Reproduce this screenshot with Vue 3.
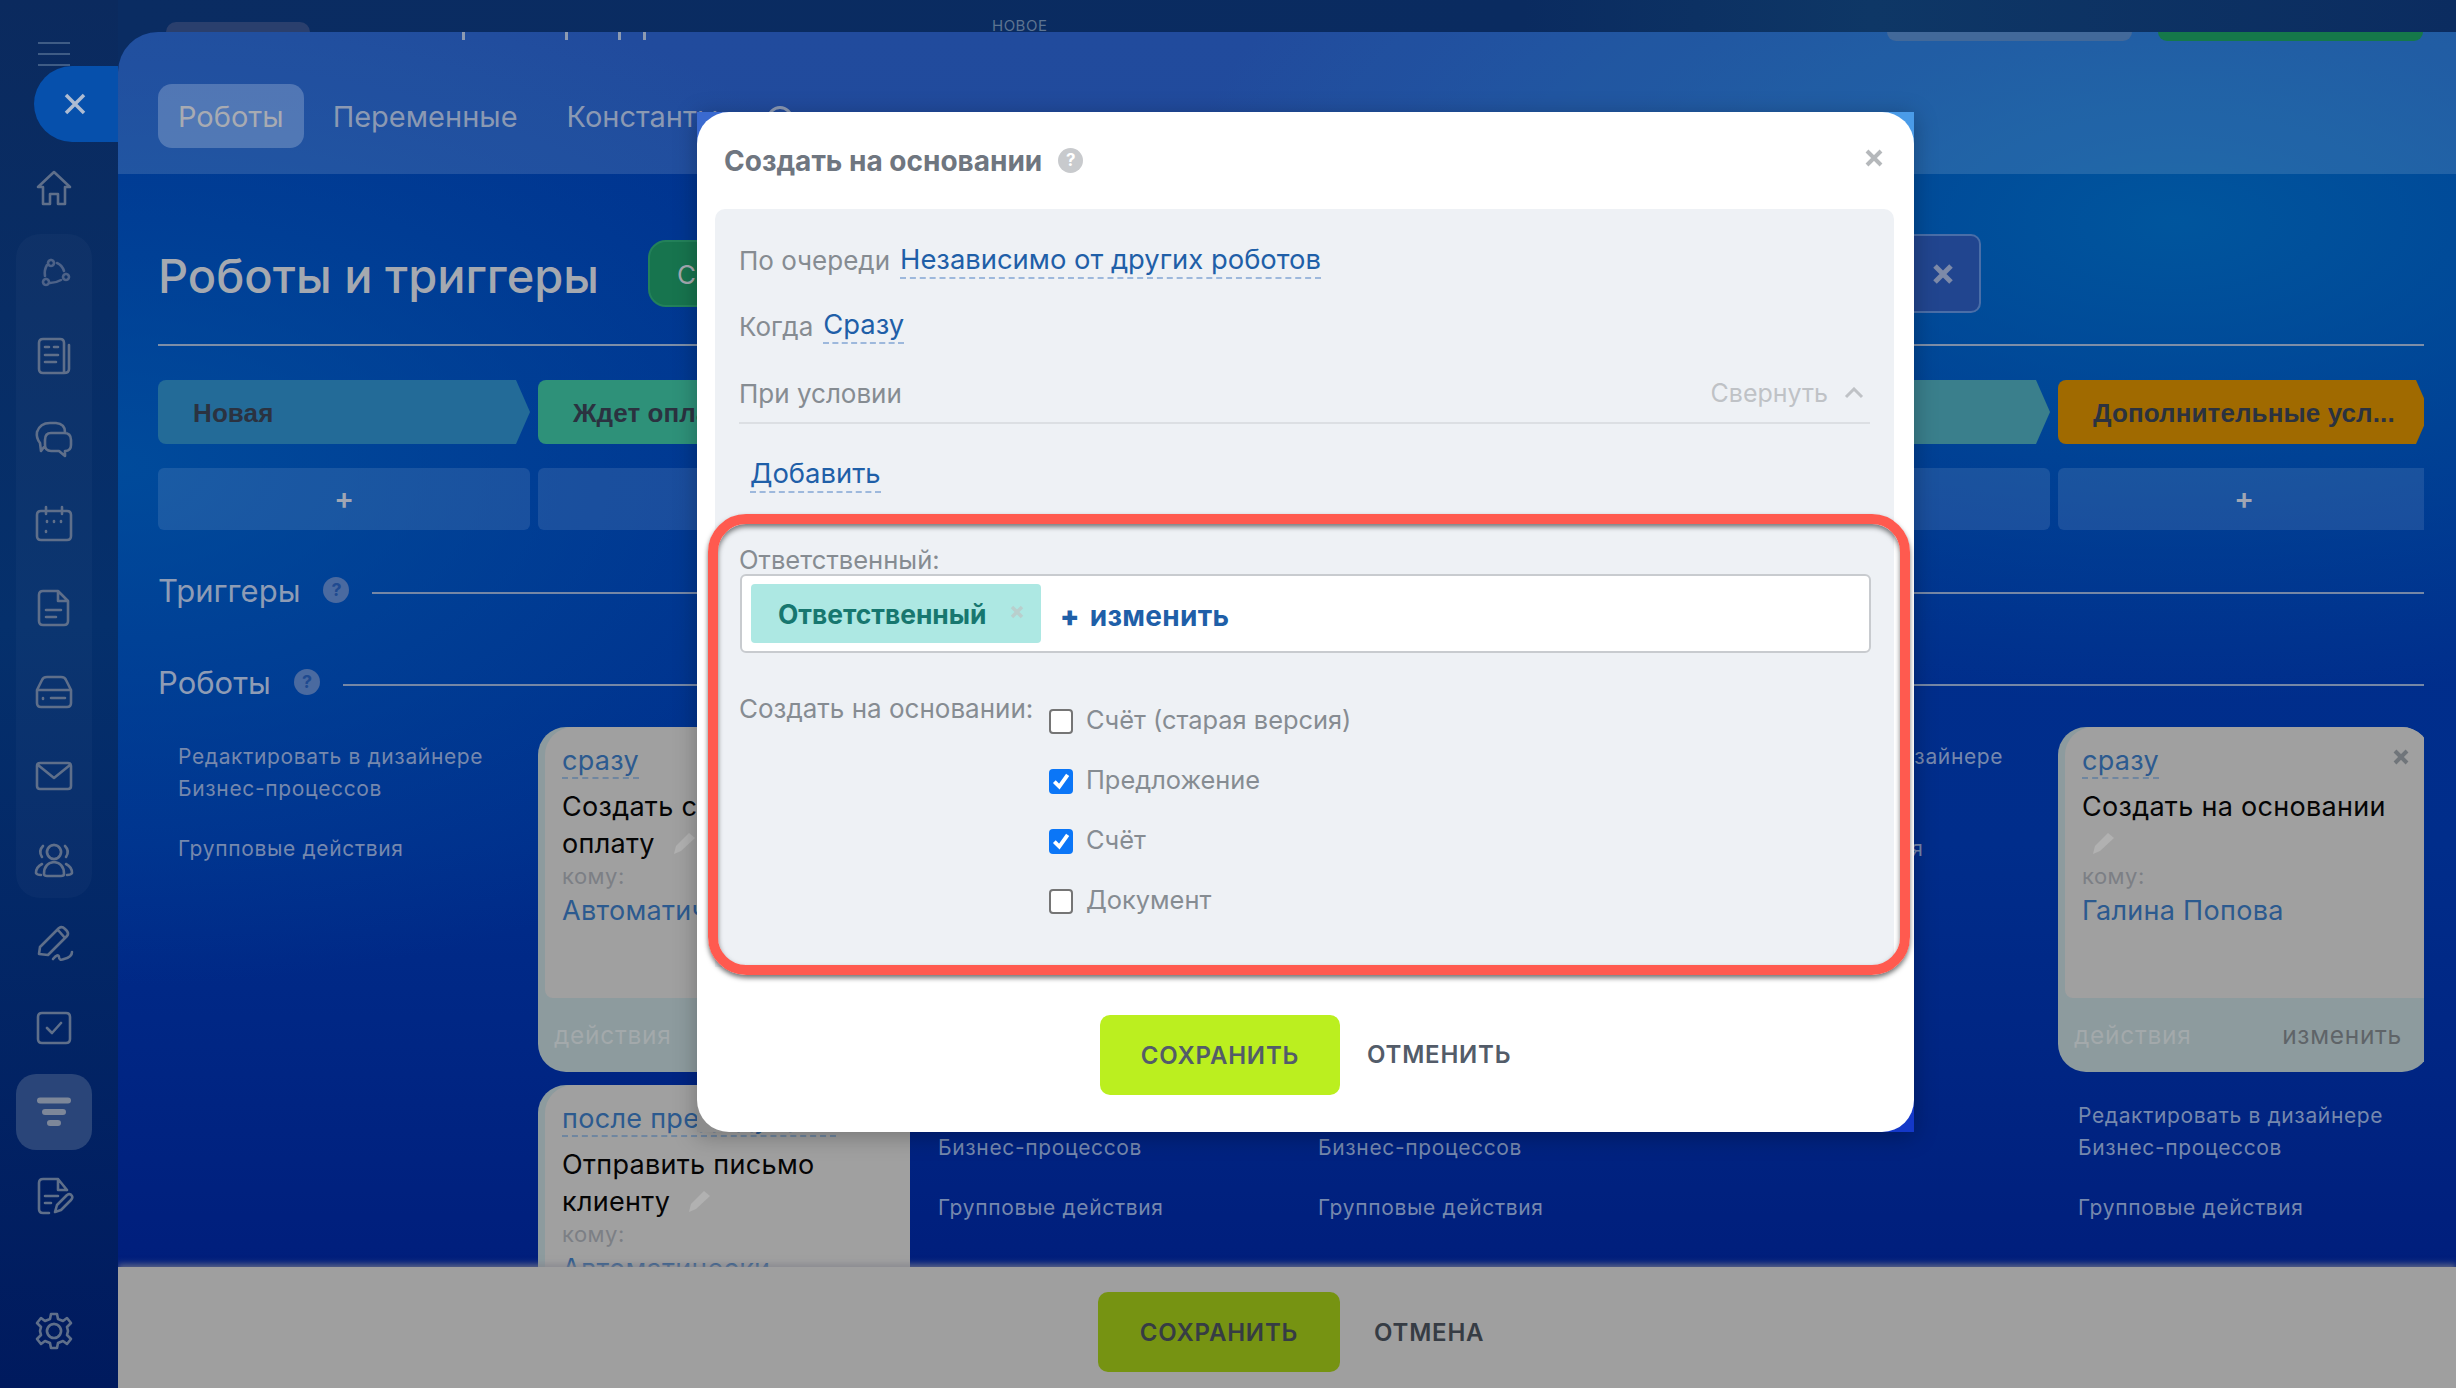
<template>
  <div class="page">
    <aside class="sidebar">
      <div class="burger"><i></i><i></i><i></i></div>
      <div class="close-tab">
        <svg width="24" height="24" viewBox="0 0 24 24"><path d="M3 3L21 21M21 3L3 21" /></svg>
      </div>
      <div class="nav-cell" v-for="ic in navTop" :key="ic"><svg width="40" height="40" viewBox="0 0 40 40"><path :d="ic" /></svg></div>
      <div class="nav-group">
        <div class="nav-item" v-for="ic in navGroup" :key="ic"><svg width="40" height="40" viewBox="0 0 40 40"><path :d="ic" /></svg></div>
      </div>
      <div class="nav-cell" v-for="ic in navMid" :key="ic"><svg width="40" height="40" viewBox="0 0 40 40"><path :d="ic" /></svg></div>
      <div class="nav-cell active"><svg class="thick" width="40" height="40" viewBox="0 0 40 40"><path d="M6 8.500H34M11 20H29M16 31H24" /></svg></div>
      <div class="nav-cell"><svg width="40" height="40" viewBox="0 0 40 40"><path :d="docEdit" /></svg></div>
      <div class="nav-cell gear"><svg width="40" height="40" viewBox="0 0 40 40"><path :d="gear" /></svg></div>
    </aside>

    <div class="main">
      <div class="topbar">
        <div class="top-pill"></div>
        <div class="top-new">НОВОЕ</div>
      </div>
      <div class="panel">
        <span class="tick" v-for="x in [344, 447, 500, 525]" :key="x" :style="{ left: x + 'px' }"></span>
        <span class="peek grey"></span>
        <span class="peek green"></span>
        <div class="tabs">
          <div class="tab on">Роботы</div>
          <div class="tab">Переменные</div>
          <div class="tab">Константы</div>
          <span class="tab-help"></span>
        </div>
        <div class="body">
          <div class="title-row">
            <h1>Роботы и триггеры</h1>
            <div class="btn-green">Создать</div>
            <div class="btn-x">
              <svg width="22" height="22" viewBox="0 0 22 22"><path d="M3 3L19 19M19 3L3 19" /></svg>
            </div>
          </div>
          <div class="stages">
            <div class="stage-col" v-for="(s, i) in stages" :key="i">
              <div class="stage" :style="{ background: s.color }">{{ s.name }}</div>
              <div class="stage-add">+</div>
            </div>
          </div>
          <div class="section"><span class="section-name">Триггеры</span><span class="help">?</span><span class="section-line"></span></div>
          <div class="section second"><span class="section-name">Роботы</span><span class="help">?</span><span class="section-line"></span></div>
          <div class="robots">
            <div class="robot-col" v-for="(col, i) in columns" :key="i">
              <div class="card" v-for="(c, j) in col.cards" :key="j">
                <div class="card-main">
                  <template v-if="c.title">
                    <span class="when">{{ c.when }}</span>
                    <svg v-if="c.close" class="card-x" width="16" height="16" viewBox="0 0 16 16"><path d="M2 2L14 14M14 2L2 14" /></svg>
                    <div class="card-title">{{ c.title }}
                      <svg class="pencil" width="26" height="24" viewBox="0 0 26 24"><path d="M18 2L24 7L10 20L3 23L5 15Z" /></svg>
                    </div>
                    <div class="to">кому:</div>
                    <div class="who">{{ c.who }}</div>
                  </template>
                </div>
                <div class="card-foot" v-if="c.title"><span class="acts">действия</span><span class="edit">изменить</span></div>
              </div>
              <div class="links" v-if="col.links">
                <div>Редактировать в дизайнере<br />Бизнес-процессов</div>
                <div class="links-gap">Групповые действия</div>
              </div>
            </div>
          </div>
        </div>
        <div class="footer">
          <div class="footer-save">СОХРАНИТЬ</div>
          <div class="footer-cancel">ОТМЕНА</div>
        </div>
      </div>
    </div>

    <div class="modal-back">
      <div class="modal">
        <div class="modal-head">
          <span class="modal-title">Создать на основании</span>
          <span class="modal-help">?</span>
          <svg class="modal-x" width="18" height="18" viewBox="0 0 18 18"><path d="M2 2L16 16M16 2L2 16" /></svg>
        </div>
        <div class="form">
          <div class="form-top">
            <div class="row"><span class="lbl">По очереди</span><span class="dash">Независимо от других роботов</span></div>
            <div class="row when-row"><span class="lbl">Когда</span><span class="dash">Сразу</span></div>
            <div class="cond">
              <span class="lbl">При условии</span>
              <span class="fold">Свернуть
                <svg width="20" height="12" viewBox="0 0 20 12"><path d="M2 10L10 2L18 10" /></svg>
              </span>
            </div>
            <div class="add"><span class="dash">Добавить</span></div>
          </div>
          <div class="highlight">
            <div class="lbl resp">Ответственный:</div>
            <div class="resp-box">
              <div class="tag">Ответственный
                <svg width="14" height="14" viewBox="0 0 14 14"><path d="M2 2L12 12M12 2L2 12" /></svg>
              </div>
              <div class="change"><b>+</b> изменить</div>
            </div>
            <div class="base">
              <div class="lbl base-lbl">Создать на основании:</div>
              <div>
                <div class="check-row" v-for="o in options" :key="o.text">
                  <span class="check" :class="{ checked: o.on }">
                    <svg v-if="o.on" width="20" height="20" viewBox="0 0 18 18"><path d="M3 9.500L7.500 14L15 3.500" /></svg>
                  </span>
                  {{ o.text }}
                </div>
              </div>
            </div>
          </div>
        </div>
        <div class="modal-foot">
          <div class="modal-save">СОХРАНИТЬ</div>
          <div class="modal-cancel">ОТМЕНИТЬ</div>
        </div>
      </div>
    </div>
  </div>
</template>

<script setup>
const navTop = [
  'M4 19L20 4L36 19H31V36H24V26H16V36H9V19Z'
]
const navGroup = [
  'M17 8a3 3 0 1 0 .01 0M12 27a3 3 0 1 0 .01 0M32 22a3 3 0 1 0 .01 0M23 11Q28 13 30 19M11 24Q10 18 13 13M16 31Q22 31 27 28',
  'M9 3H26Q30 3 30 7V37H9Q5 37 5 33V7Q5 3 9 3ZM11 11H15M20 11H24M11 19H24M11 26H22M35 9V33Q35 37 30 37',
  'M10 27L7 31L6 23Q2 18 3 12Q6 3 16 3H22Q31 4 31 12M17 13H30Q37 13 37 20V25Q37 31 31 31V36L25 31H17Q11 31 11 25V20Q11 13 17 13Z',
  'M7 7H33Q37 7 37 11V32Q37 36 33 36H7Q3 36 3 32V11Q3 7 7 7ZM12 3V10M28 3V10M13 17V18M20 17V18M27 17V18M12 27V28',
  'M9 3H24L34 13V33Q34 37 30 37H9Q5 37 5 33V7Q5 3 9 3ZM24 3V13H34M12 22H27M12 29H22',
  'M8 8Q9 5 13 5H27Q31 5 32 8L37 18V31Q37 35 33 35H7Q3 35 3 31V18ZM3 18H37M9 26V27M17 26H31',
  'M6 7H34Q37 7 37 10V30Q37 33 34 33H6Q3 33 3 30V10Q3 7 6 7ZM4 9L20 22L36 9',
  'M20 5a7 7 0 1 0 .01 0M10 34Q10 23 20 22Q30 23 30 34Q30 36 27 36H13Q10 36 10 34ZM9 6Q4 11 8 17M31 6Q36 11 32 17M8 24Q2 27 2 33Q3 35 7 35M32 24Q38 27 38 33Q37 35 33 35'
]
const navMid = [
  'M5 30L6 23L25 4Q28 2 31 5L33 7Q35 10 33 12L14 31ZM5 30L14 31M24 6L31 14M19 35Q24 29 25 33Q25 37 30 35Q38 33 38 28',
  'M8 5H32Q36 5 36 9V31Q36 35 32 35H8Q4 35 4 31V9Q4 5 8 5ZM13 20L18 25L27 15'
]
const docEdit = 'M33 14L24 3H9Q5 3 5 7V33Q5 37 9 37H15M24 3V14H33M11 20H24M11 27H17M21 36L23 29L33 19Q36 17 38 20Q39 22 37 24L27 34Z'
const gear = 'M20 13a7 7 0 1 0 .01 0M17 3H23L24 8L29 10L33 7L37 12L33 16L34 20L33 24L37 28L33 33L29 30L24 32L23 37H17L16 32L11 30L7 33L3 28L7 24L6 20L7 16L3 12L7 7L11 10L16 8Z'

const options = [
  { text: 'Счёт (старая версия)', on: false },
  { text: 'Предложение', on: true },
  { text: 'Счёт', on: true },
  { text: 'Документ', on: false }
]

const stages = [
  { name: 'Новая', color: '#236b98' },
  { name: 'Ждет оплаты', color: '#2e9179' },
  { name: '', color: '#2e8a86' },
  { name: '', color: '#36848a' },
  { name: '', color: '#3a7f8c' },
  { name: 'Дополнительные усл...', color: '#a06a00' }
]

const columns = [
  { links: true, cards: [] },
  {
    links: false,
    cards: [
      { when: 'сразу', title: 'Создать счет на\nоплату', who: 'Автоматически' },
      { when: 'после предыдущего', title: 'Отправить письмо\nклиенту', who: 'Автоматически' }
    ]
  },
  { links: true, cards: [{}] },
  { links: true, cards: [{}] },
  { links: true, cards: [] },
  { links: true, cards: [{ when: 'сразу', title: 'Создать на основании', who: 'Галина Попова', close: true }] }
]
</script>

<style>
html, body { margin: 0; background: #001a5e; }
</style>

<style scoped>
.page {
  position: relative;
  display: flex;
  width: 2456px;
  height: 1388px;
  overflow: hidden;
  font-family: Inter, "Noto Sans", sans-serif;
}

/* sidebar */
.sidebar {
  width: 118px;
  flex: none;
  display: flex;
  flex-direction: column;
  padding-top: 42px;
  box-sizing: border-box;
  background: linear-gradient(180deg, #0b2a5e 0%, #05306c 45%, #001a5e 100%);
}
.burger {
  width: 32px;
  height: 24px;
  margin-left: 38px;
  display: flex;
  flex-direction: column;
  justify-content: space-between;
}
.burger i { height: 2px; background: #3f5c85; }
.close-tab {
  height: 76px;
  margin-left: 34px;
  border-radius: 38px 0 0 38px;
  background: #0650ac;
  display: flex;
  align-items: center;
  padding-left: 29px;
}
.close-tab path { stroke: #aebcd2; stroke-width: 3.5; fill: none; }
.nav-cell, .nav-item {
  height: 76px;
  margin: 8px 26px 0 16px;
  display: flex;
  align-items: center;
  justify-content: center;
}
.nav-item { margin: 0; }
.nav-group {
  margin: 8px 26px 0 16px;
  display: flex;
  flex-direction: column;
  gap: 8px;
  border-radius: 24px;
  background: rgba(255, 255, 255, 0.028);
}
.sidebar svg path { fill: none; }
.nav-cell path, .nav-item path {
  stroke: #5f6f8a;
  stroke-width: 2.6;
  stroke-linejoin: round;
  stroke-linecap: round;
}
.nav-group .nav-item:first-child path { stroke: #4d6288; }
.nav-cell.active { background: #2a4579; border-radius: 20px; }
.nav-cell.active .thick path { stroke: #7d8799; stroke-width: 6; }
.nav-cell.gear { margin-top: auto; margin-bottom: 19px; }

/* background panel */
.main {
  flex: 1;
  min-width: 0;
  display: flex;
  flex-direction: column;
  position: relative;
  background: linear-gradient(90deg, #0a2c62, #0a2b60 60%, #0e3766 75%, #0b2c60);
}
.topbar { height: 32px; flex: none; position: relative; }
.top-pill {
  position: absolute;
  left: 48px;
  top: 22px;
  width: 144px;
  height: 10px;
  border-radius: 14px 14px 0 0;
  background: #2a3f6d;
}
.top-new {
  position: absolute;
  left: 874px;
  top: 16px;
  font-size: 15px;
  letter-spacing: 0.5px;
  color: #5d7491;
}
.panel {
  flex: 1;
  min-height: 0;
  display: flex;
  flex-direction: column;
  position: relative;
  border-top-left-radius: 40px;
  overflow: hidden;
  background:
    radial-gradient(900px 520px at 0% 32%, rgba(0, 84, 160, 0.75), transparent),
    radial-gradient(1000px 480px at 88% 14%, rgba(0, 92, 160, 0.85), transparent),
    linear-gradient(180deg, #00318f 0%, #002d8b 60%, #001a78 100%);
}
.tick {
  position: absolute;
  top: 0;
  width: 3px;
  height: 8px;
  background: #8d9bb2;
}
.peek { position: absolute; top: 0; height: 9px; border-radius: 0 0 12px 12px; }
.peek.grey { left: 1769px; width: 245px; background: #42699a; }
.peek.green { left: 2040px; width: 265px; background: #15784a; }
.tabs {
  height: 142px;
  flex: none;
  box-sizing: border-box;
  display: flex;
  align-items: flex-start;
  padding: 52px 0 0 40px;
  background: rgba(255, 255, 255, 0.13);
}
.tab {
  height: 64px;
  line-height: 66px;
  font-size: 29px;
  color: #8b99b3;
  margin-right: 49px;
}
.tab.on {
  padding: 0 20px;
  margin-right: 29px;
  border-radius: 14px;
  color: #a8abb2;
  background: rgba(255, 255, 255, 0.22);
}
.tab-help {
  width: 26px;
  height: 26px;
  margin: 22px 0 0 0;
  border: 3px solid #8b99b3;
  border-radius: 50%;
  box-sizing: border-box;
}
.body {
  flex: 1;
  min-height: 0;
  margin: 0 32px 0 40px;
  overflow: hidden;
}
.title-row {
  display: flex;
  align-items: flex-start;
  height: 172px;
  box-sizing: border-box;
  padding-top: 66px;
  border-bottom: 2px solid #7d8ea8;
}
h1 {
  margin: 2px 0 0;
  width: 490px;
  font-size: 47px;
  font-weight: 500;
  line-height: 67px;
  color: #a5a9b0;
}
.btn-green {
  width: 300px;
  height: 67px;
  line-height: 65px;
  box-sizing: border-box;
  border: 2px solid #23815a;
  border-radius: 18px;
  padding-left: 27px;
  font-size: 26px;
  color: #a5a9b0;
  background: #17744e;
}
.btn-x {
  width: 140px;
  height: 79px;
  margin: -6px 0 0 893px;
  box-sizing: border-box;
  border: 2px solid #4a6ea8;
  border-radius: 10px;
  background: #21458f;
  display: flex;
  align-items: center;
  justify-content: flex-end;
  padding-right: 25px;
}
.btn-x path { stroke: #7d8aa8; stroke-width: 5; fill: none; }
.stages { display: flex; gap: 8px; width: 2400px; margin-top: 34px; }
.stage-col { width: 372px; flex: none; }
.stage {
  height: 64px;
  line-height: 66px;
  padding-left: 35px;
  border-radius: 8px;
  font-family: "Liberation Sans", Arial, sans-serif;
  font-size: 26px;
  font-weight: 700;
  letter-spacing: 0.1px;
  color: #2b3240;
  clip-path: polygon(0 0, calc(100% - 14px) 0, 100% 50%, calc(100% - 14px) 100%, 0 100%);
}
.stage-add {
  height: 62px;
  margin-top: 24px;
  line-height: 60px;
  text-align: center;
  border-radius: 6px;
  font-size: 30px;
  font-weight: 600;
  color: #a0a6b4;
  background: rgba(255, 255, 255, 0.1);
}
.section { display: flex; align-items: center; height: 40px; margin-top: 40px; }
.section.second { margin-top: 52px; }
.section-name { font-size: 31px; color: #8e9cb5; }
.help {
  width: 26px;
  height: 26px;
  margin-left: 23px;
  border-radius: 50%;
  text-align: center;
  line-height: 26px;
  font-size: 18px;
  font-weight: 700;
  color: #1f4a90;
  background: #4a6aa0;
}
.section-line { flex: 1; height: 2px; margin: 6px 0 0 23px; background: #7587a6; }
.robots { display: flex; gap: 8px; width: 2400px; margin-top: 25px; }
.robot-col { width: 372px; flex: none; }
.card {
  height: 345px;
  margin-bottom: 13px;
  border-radius: 28px;
  background: #8d9b9e;
  display: flex;
  flex-direction: column;
  overflow: hidden;
}
.card-main {
  position: relative;
  height: 271px;
  flex: none;
  box-sizing: border-box;
  margin-left: 7px;
  padding: 18px 20px 0 17px;
  border-radius: 28px 0 0 8px;
  background: #a0a0a0;
}
.when {
  display: inline-block;
  font-size: 27px;
  line-height: 32px;
  letter-spacing: 0.3px;
  color: #2c5a8f;
  border-bottom: 2px dashed #6f86a0;
}
.card-x { position: absolute; right: 21px; top: 22px; }
.card-x path { stroke: #70757a; stroke-width: 4; fill: none; }
.card-title {
  margin-top: 9px;
  font-size: 27px;
  line-height: 37px;
  letter-spacing: 0.3px;
  color: #050505;
  white-space: pre-line;
}
.pencil { vertical-align: -2px; margin-left: 8px; }
.pencil path { fill: #b1b1b1; }
.to { font-size: 22px; line-height: 28px; letter-spacing: 0.5px; color: #7c7f85; }
.who { margin-top: 3px; font-size: 27px; line-height: 36px; letter-spacing: 0.3px; color: #2c5a8f; }
.card-foot {
  flex: 1;
  display: flex;
  justify-content: space-between;
  align-items: center;
  padding: 0 28px 0 16px;
  font-size: 24.500px;
  letter-spacing: 0.7px;
}
.acts { color: #a3a9ab; }
.edit { color: #5f6468; }
.links {
  padding: 15px 0 0 20px;
  font-size: 21px;
  line-height: 32px;
  letter-spacing: 0.65px;
  color: #7688ad;
}
.robot-col:first-child .links, .robot-col:nth-child(5) .links { padding-top: 14px; }
.links-gap { margin-top: 28px; }
.footer {
  height: 121px;
  flex: none;
  position: relative;
  display: flex;
  align-items: flex-start;
  padding: 25px 0 0 980px;
  box-sizing: border-box;
  background: #9f9f9f;
  box-shadow: 0 -3px 6px rgba(130, 130, 140, 0.7);
  font-size: 24px;
  font-weight: 600;
  letter-spacing: 0.8px;
  color: #363c44;
}
.footer-save {
  width: 242px;
  height: 80px;
  line-height: 82px;
  text-align: center;
  border-radius: 10px;
  background: #769312;
}
.footer-cancel { line-height: 82px; margin-left: 34px; }

/* modal */
.modal-back {
  position: absolute;
  left: 697px;
  top: 112px;
  width: 1217px;
  height: 1020px;
  background:
    linear-gradient(#3a6ad0, #3a6ad0) 0 0 / 40px 40px no-repeat,
    linear-gradient(#4a9be8, #4a9be8) 100% 0 / 40px 40px no-repeat,
    linear-gradient(#1438c8, #1438c8) 100% 100% / 40px 40px no-repeat,
    linear-gradient(#8c8c8c, #8c8c8c) 0 100% / 40px 40px no-repeat;
  box-shadow: 0 4px 22px rgba(0, 0, 0, 0.28);
}
.modal {
  height: 100%;
  border-radius: 32px;
  background: #fff;
  box-sizing: border-box;
  padding: 0 20px 0 18px;
  display: flex;
  flex-direction: column;
}
.modal-head {
  height: 97px;
  flex: none;
  display: flex;
  align-items: center;
  padding: 0 0 0 9px;
  position: relative;
}
.modal-title { font-size: 28px; font-weight: 700; color: #6f7680; }
.modal-help {
  width: 25px;
  height: 25px;
  margin-left: 16px;
  border-radius: 50%;
  background: #c8cacd;
  color: #fff;
  font-size: 17px;
  font-weight: 700;
  text-align: center;
  line-height: 25px;
}
.modal-x { position: absolute; right: 11px; top: 37px; }
.modal-x path { stroke: #b5b8bb; stroke-width: 4; fill: none; }
.form {
  border-radius: 10px 10px 0 0;
  background: #eef1f5;
  margin-bottom: 47px;
}
.form-top { height: 305px; box-sizing: border-box; padding: 32px 24px 0 24px; }
.lbl { font-size: 26px; color: #868c92; }
.row { display: flex; align-items: flex-start; line-height: 36px; height: 40px; }
.row .lbl { margin-right: 10px; line-height: 40px; }
.when-row { margin-top: 26px; }
.when-row .dash { margin-top: -1px; }
.dash {
  display: inline-block;
  font-size: 27.400px;
  line-height: 36px;
  color: #1f5fa8;
  border-bottom: 2px dashed #9db8dc;
}
.cond {
  height: 57px;
  margin-top: 20px;
  box-sizing: border-box;
  border-bottom: 2px solid #dcdfe3;
  display: flex;
  justify-content: space-between;
  align-items: center;
  padding-bottom: 3px;
}
.fold {
  display: flex;
  align-items: center;
  gap: 16px;
  padding-right: 6px;
  font-size: 25px;
  color: #bfc2c6;
}
.fold path { stroke: #bfc2c6; stroke-width: 3; fill: none; }
.add { margin: 31px 0 0 11px; }
.highlight {
  height: 461px;
  box-sizing: border-box;
  margin: 0 -16px -8px -7px;
  padding: 21px 29px 0 21px;
  border: 10px solid #ff5a4f;
  border-radius: 38px;
  position: relative;
  box-shadow: 0 3px 5px rgba(0, 0, 0, 0.55), inset 0 3px 5px rgba(0, 0, 0, 0.5);
}
.resp { font-size: 25.600px; line-height: 29px; }
.resp-box {
  height: 79px;
  margin-left: 1px;
  box-sizing: border-box;
  border: 2px solid #c8cbcf;
  border-radius: 6px;
  background: #fff;
  display: flex;
  align-items: center;
  padding-left: 9px;
}
.tag {
  width: 290px;
  height: 59px;
  box-sizing: border-box;
  padding-left: 27px;
  border-radius: 4px;
  background: #ade8e3;
  font-size: 26.400px;
  font-weight: 700;
  line-height: 60px;
  color: #17776f;
  position: relative;
}
.tag svg { position: absolute; right: 17px; top: 21px; }
.tag path { stroke: #b9cfcd; stroke-width: 3.500; fill: none; }
.change { margin: 4px 0 0 19px; font-size: 28px; font-weight: 700; letter-spacing: 0.3px; color: #1f5fa8; }
.change b { margin-right: 3px; }
.base { display: flex; margin-top: 36px; }
.base-lbl { width: 310px; flex: none; line-height: 40px; }
.check-row {
  height: 60px;
  display: flex;
  align-items: center;
  gap: 13px;
  font-size: 25.400px;
  color: #868c92;
}
.check {
  width: 24px;
  height: 25px;
  margin-top: 4px;
  box-sizing: border-box;
  border: 2px solid #757575;
  border-radius: 4px;
  background: #fff;
  display: flex;
  align-items: center;
  justify-content: center;
}
.check.checked { border: 0; background: #0b76f7; }
.check path { stroke: #fff; stroke-width: 3.5; fill: none; }
.modal-foot { display: flex; align-items: center; padding-left: 385px; }
.modal-save {
  width: 240px;
  height: 80px;
  line-height: 82px;
  text-align: center;
  border-radius: 10px;
  background: #bbef1f;
  font-size: 24px;
  font-weight: 600;
  letter-spacing: 0.8px;
  color: #535c69;
}
.modal-cancel {
  margin-left: 27px;
  font-size: 24px;
  font-weight: 600;
  letter-spacing: 0.8px;
  line-height: 82px;
  color: #535c69;
}
</style>
